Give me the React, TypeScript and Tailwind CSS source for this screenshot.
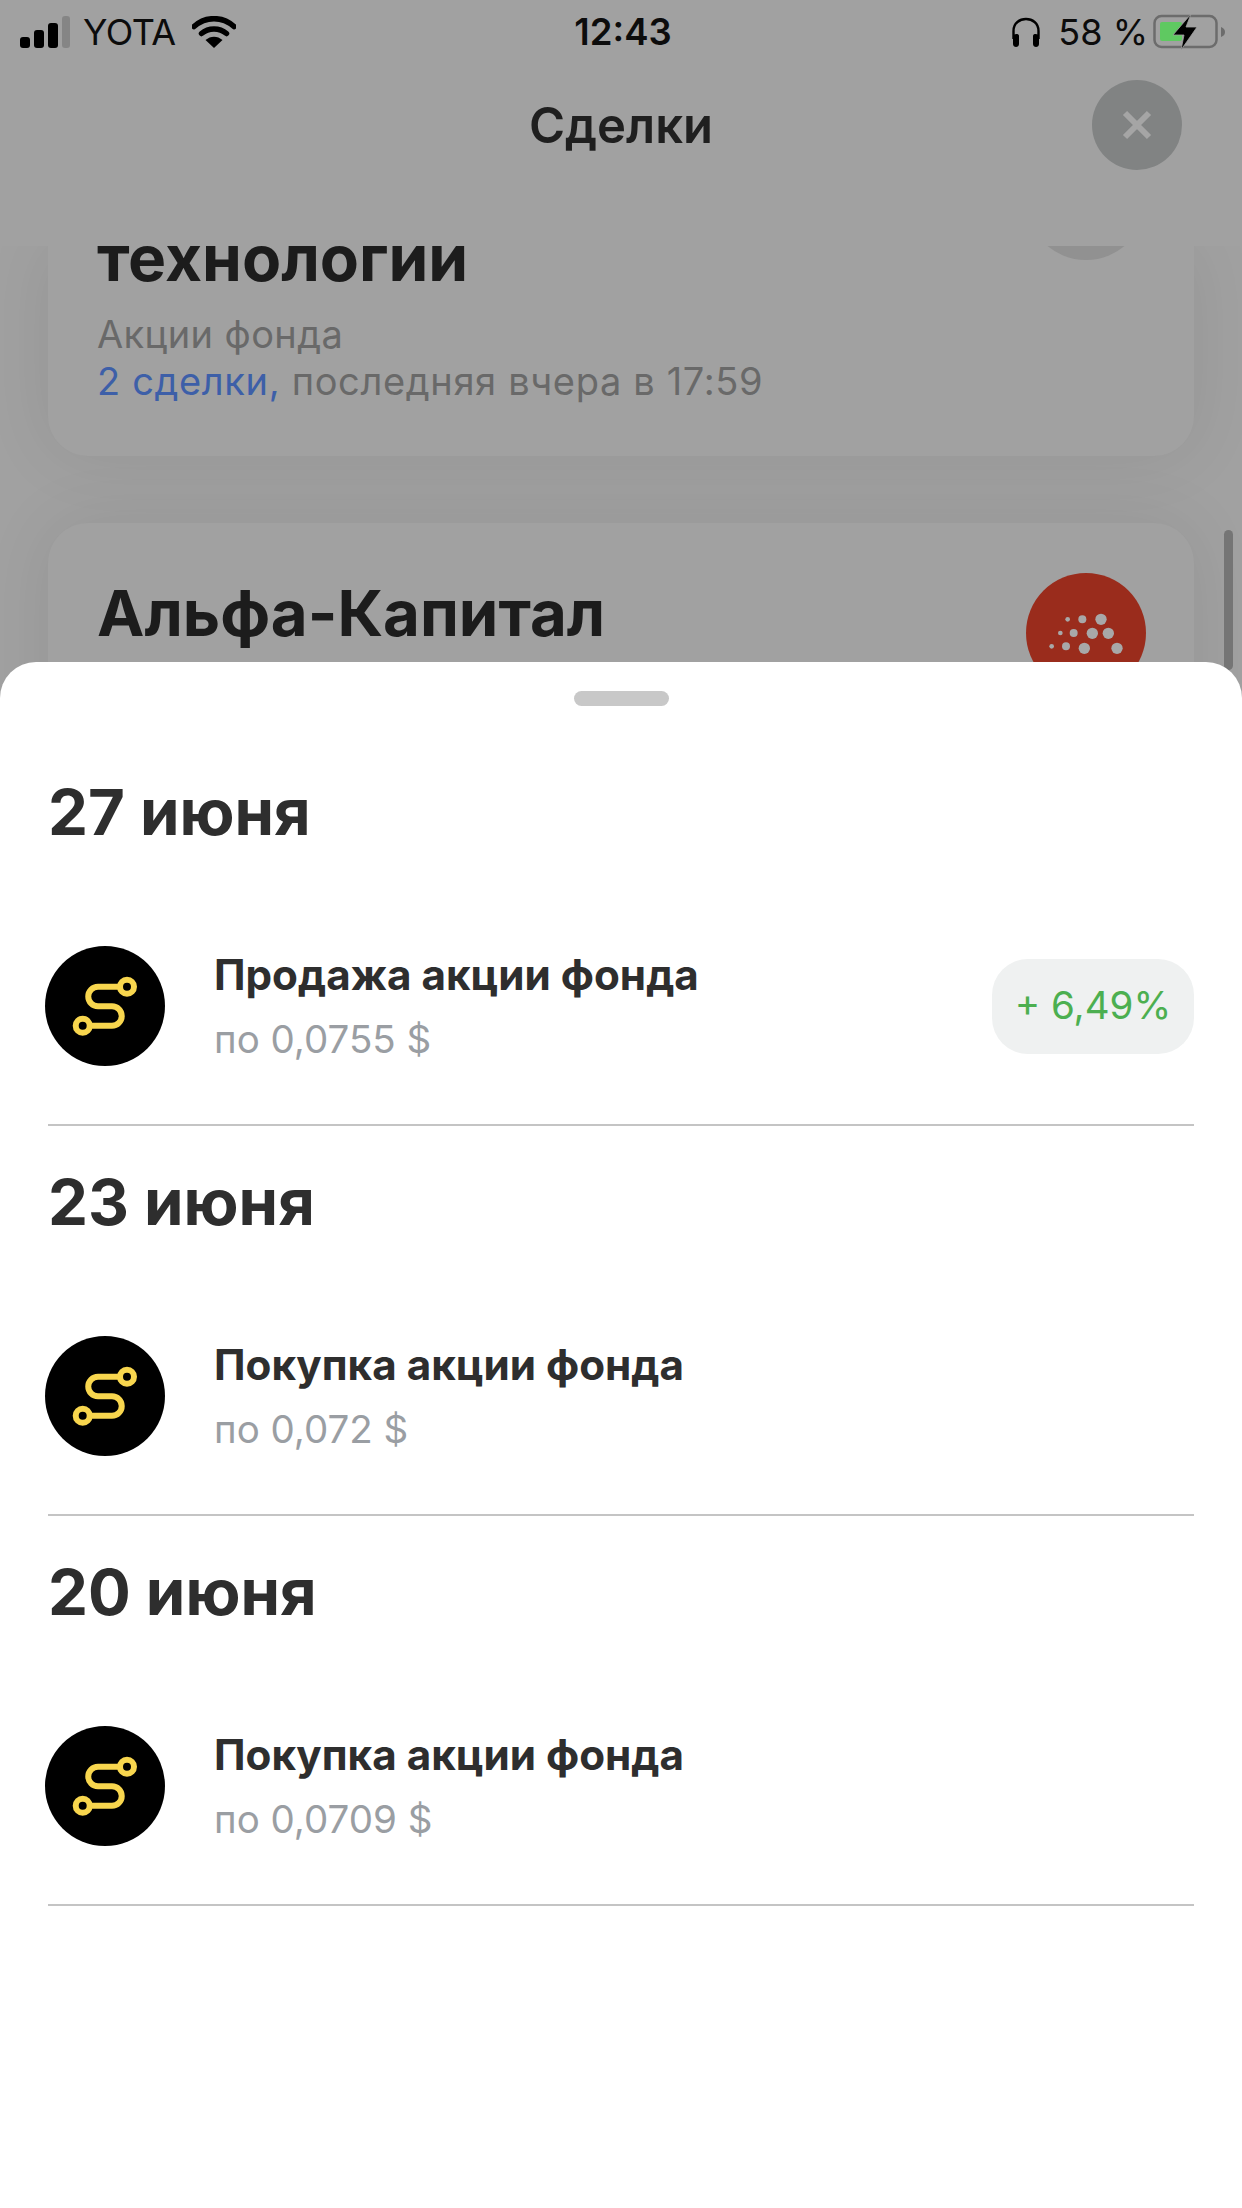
const trades = [
  { date: "27 июня", title: "Продажа акции фонда", price: "по 0,0755 $", gain: "+ 6,49%" },
  { date: "23 июня", title: "Покупка акции фонда", price: "по 0,072 $" },
  { date: "20 июня", title: "Покупка акции фонда", price: "по 0,0709 $" },
]

const dots = [
  [503, 507, 7], [547, 507, 12], [603, 507, 17],
  [481, 548, 7], [521, 548, 12], [577, 549, 17], [625, 549, 17],
  [455, 588, 7], [498, 588, 12], [553, 594, 17], [651, 594, 17],
]

function StatusBar() {
  return (
    <div className="grid h-[62px] grid-cols-[1fr_auto_1fr] items-center pl-5 pr-4 pt-[2px] text-[36px] text-[#0c0c0c]">
      <div className="flex items-center">
        <svg width="50" height="32" viewBox="0 0 50 32">
          <rect x="0" y="21" width="10" height="11" rx="3" fill="#000" />
          <rect x="14" y="14" width="10" height="18" rx="3" fill="#000" />
          <rect x="28" y="7" width="10" height="25" rx="3" fill="#000" />
          <rect x="42" y="0" width="8" height="32" rx="3" fill="#858585" />
        </svg>
        <span className="ml-[13px] tracking-[-0.5px]">YOTA</span>
        <svg className="ml-[16px]" width="44" height="32" viewBox="0 0 44 32">
          <path d="M2 10.5C13.5 0 30.5 0 42 10.5" fill="none" stroke="#000" strokeWidth="5.5" strokeLinecap="round" />
          <path d="M9.5 17.5C16.5 11.5 27.5 11.5 34.5 17.5" fill="none" stroke="#000" strokeWidth="5.5" strokeLinecap="round" />
          <path d="M22 32L13.5 24C18.5 19.5 25.5 19.5 30.5 24Z" fill="#000" />
        </svg>
      </div>
      <span className="text-[36.5px] font-semibold">12:43</span>
      <div className="flex items-center justify-end">
        <svg width="30" height="30" viewBox="0 0 30 30">
          <path d="M2.5 22V14C2.5 -2 27.500 -2 27.500 14V22" fill="none" stroke="#000" strokeWidth="2.4" />
          <path d="M2 19C2 17 8 16 8 19V27C8 31 2 31 2 27Z" fill="#000" />
          <path d="M28 19C28 17 22 16 22 19V27C22 31 28 31 28 27Z" fill="#000" />
        </svg>
        <span className="ml-[17px]">58 %</span>
        <svg className="ml-[5px]" width="73" height="36" viewBox="0 0 73 36">
          <rect x="1.5" y="2" width="62" height="31" rx="7" fill="none" stroke="#6c6c6c" strokeWidth="2.5" />
          <rect x="7" y="8" width="22" height="19" rx="2" fill="#5fc961" />
          <path d="M68 13C71 14 72 16 72 18C72 20 71 22 68 23Z" fill="#6c6c6c" />
          <path d="M38 0L20 21H31L28 36L44 13H33Z" fill="#000" stroke="#a1a1a1" strokeWidth="0.8" />
        </svg>
      </div>
    </div>
  )
}

function FundIcon() {
  return (
    <svg className="-ml-[3px] shrink-0" width="120" height="120" viewBox="0 0 120 120">
      <circle cx="60" cy="60" r="60" fill="#000" />
      <g fill="none" stroke="#f8d64e" strokeWidth="6">
        <circle cx="82" cy="40.7" r="7" />
        <circle cx="37.7" cy="79.7" r="7" />
        <path d="M75 40.7H53A9.75 9.75 0 0 0 53 60.2H67A9.75 9.75 0 0 1 67 79.7H44.7" />
      </g>
    </svg>
  )
}

export default function App() {
  return (
    <div className="flex h-[2208px] w-[1242px] flex-col overflow-hidden bg-white font-['Inter',sans-serif]">
      {/* dimmed header */}
      <div className="relative z-10 h-[246px] shrink-0 bg-[#a1a1a1]">
        <StatusBar />
        <div className="grid h-[126px] grid-cols-[1fr_auto_1fr] items-center">
          <div />
          <h1 className="mt-[2px] text-[49px] font-semibold text-[#1f1f1f]">Сделки</h1>
          <button className="mr-[60px] flex h-[90px] w-[90px] items-center justify-center justify-self-end rounded-full bg-[#818383]">
            <svg width="32" height="32" viewBox="0 0 32 32">
              <path d="M4 4L28 28M28 4L4 28" stroke="#a5a5a5" strokeWidth="6" />
            </svg>
          </button>
        </div>
      </div>

      {/* dimmed list behind the sheet */}
      <div className="relative h-[456px] shrink-0 overflow-hidden bg-[#a1a1a1]">
        <div className="absolute right-[9px] top-[284px] h-[140px] w-[9px] rounded-full bg-[#757575]" />
        <div className="absolute left-[1026px] top-[-106px] h-[120px] w-[120px] rounded-full bg-[#919191]" />

        <div className="mx-[48px] flex h-[210px] flex-col rounded-b-[40px] bg-[#a1a1a1] px-[49px] shadow-[0_0_70px_rgba(0,0,0,0.08)]">
          <div className="-mt-[24px] text-[64px] font-bold leading-[72px] text-[#1c1c1c]">технологии</div>
          <div className="mt-[17px] text-[38px] leading-[47px] tracking-[0.4px] text-[#696969]">Акции фонда</div>
          <div className="text-[38px] leading-[47px] tracking-[0.65px] text-[#696969]">
            <span className="text-[#3d5fa8]">2 сделки,</span> последняя вчера в 17:59
          </div>
        </div>

        <div className="mx-[48px] mt-[67px] flex h-[240px] items-start justify-between rounded-t-[40px] bg-[#a1a1a1] pl-[49px] pr-[48px] shadow-[0_0_70px_rgba(0,0,0,0.08)]">
          <div className="mt-[54px] text-[63.5px] font-bold leading-[72px] text-[#1c1c1c]">Альфа-Капитал</div>
          <svg className="mt-[50px]" width="120" height="120" viewBox="378 368 360 360">
            <circle cx="558" cy="548" r="180" fill="#9a2c1c" />
            {dots.map(([cx, cy, r]) => (
              <circle key={`${cx}-${cy}`} cx={cx} cy={cy} r={r} fill="#a8a8a8" />
            ))}
          </svg>
        </div>
      </div>

      {/* bottom sheet */}
      <div className="relative z-10 -mt-[40px] flex-1 rounded-t-[36px] bg-white pt-[29px]">
        <div className="mx-auto h-[15px] w-[95px] rounded-full bg-[#c8c8c8]" />
        <div className="mt-[31px]">
          {trades.map((trade) => (
            <section key={trade.date} className="mx-[48px] pt-[39px]">
              <h2 className="text-[63.5px] font-bold leading-[72px] text-[#2e2e2e]">{trade.date}</h2>
              <div className="mt-[98px] flex h-[120px] items-center">
                <FundIcon />
                <div className="ml-[49px] mt-[2px]">
                  <div className="text-[42.2px] font-bold leading-[44px] text-[#2e2e2e]">{trade.title}</div>
                  <div className="mt-[20px] text-[38.5px] leading-[44px] text-[#9a9ea3]">{trade.price}</div>
                </div>
                {trade.gain && (
                  <div className="ml-auto flex h-[95px] w-[202px] items-center justify-center rounded-[36px] bg-[#eff1f1] text-[38.500px] text-[#4caf50]">
                    {trade.gain}
                  </div>
                )}
              </div>
              <div className="mt-[59px] h-[2px] -translate-y-[1px] bg-[#c4c4c4]" />
            </section>
          ))}
        </div>
      </div>
    </div>
  )
}
